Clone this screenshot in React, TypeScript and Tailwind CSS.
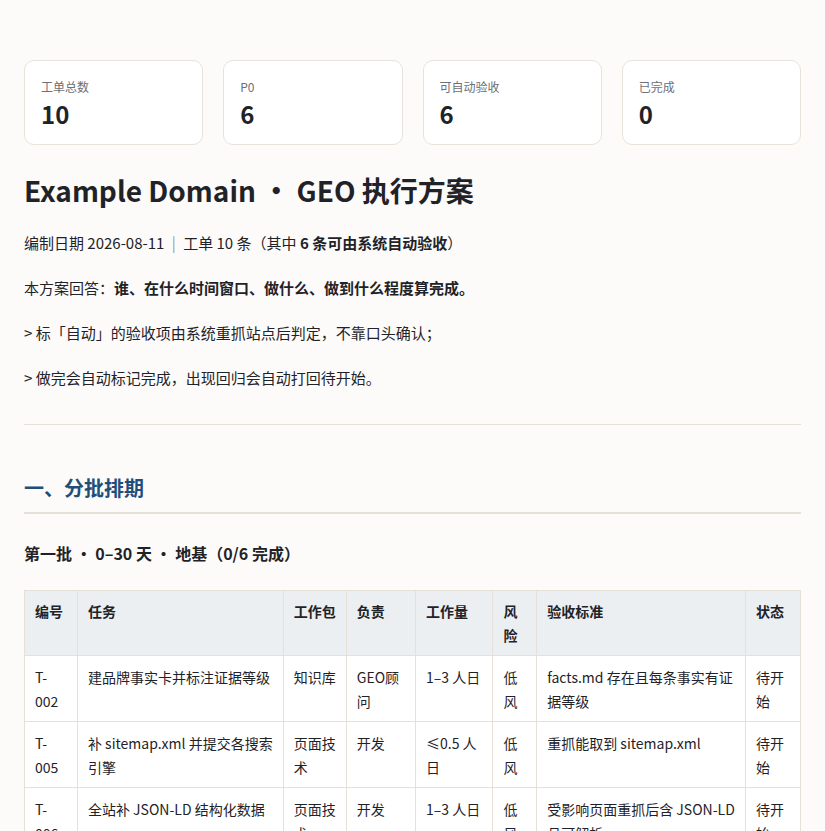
const stats = [
  { label: "工单总数", value: "10" },
  { label: "P0", value: "6" },
  { label: "可自动验收", value: "6" },
  { label: "已完成", value: "0" },
];

const rows = [
  ["T-002", "建品牌事实卡并标注证据等级", "知识库", "GEO顾问", "1–3 人日", "低风", "facts.md 存在且每条事实有证据等级", "待开始"],
  ["T-005", "补 sitemap.xml 并提交各搜索引擎", "页面技术", "开发", "≤0.5 人日", "低风", "重抓能取到 sitemap.xml", "待开始"],
  ["T-006", "全站补 JSON-LD 结构化数据", "页面技术", "开发", "1–3 人日", "低风", "受影响页面重抓后含 JSON-LD 且可解析", "待开始"],
  ["T-007", "补 robots.txt 放行主流 AI 爬虫", "页面技术", "开发", "≤0.5 人日", "低风", "重抓 robots.txt 不屏蔽 GPTBot 等", "待开始"],
];

const heads = ["编号", "任务", "工作包", "负责", "工作量", "风险", "验收标准", "状态"];
const widths = ["w-[52px]", "w-[202px]", "w-[62px]", "w-[68px]", "w-[76px]", "w-[43px]", "w-[205px]", "w-[54px]"];

export default function App() {
  return (
    <div className="h-screen overflow-y-scroll bg-[#fcfbf9] text-[#1f2328] text-[15px]" style={{ fontFamily: '"Noto Sans CJK SC", "Noto Sans", sans-serif' }}>
      <div className="px-6 pt-[60px] pb-20">
        <div className="grid grid-cols-4 gap-[20px]">
          {stats.map((s) => (
            <div key={s.label} className="h-[85px] rounded-[10px] border border-[#e8e3da] bg-white px-4 pt-[17px]">
              <div className="text-[12px] text-[#6b6f76] leading-[18px]">{s.label}</div>
              <div className="text-[24px] font-bold leading-[34px] mt-[1px]">{s.value}</div>
            </div>
          ))}
        </div>

        <h1 className="mt-[23px] text-[28px] font-bold leading-[44px]">Example Domain · GEO 执行方案</h1>
        <p className="mt-[19px] leading-[24px]">
          编制日期 2026-08-11 <span className="text-[#999] mx-1">|</span> 工单 10 条（其中 <b>6 条可由系统自动验收</b>）
        </p>
        <p className="mt-[21px] leading-[24px]">本方案回答：<b>谁、在什么时间窗口、做什么、做到什么程度算完成。</b></p>
        <p className="mt-[21px] leading-[24px]">&gt; 标「自动」的验收项由系统重抓站点后判定，不靠口头确认；</p>
        <p className="mt-[21px] leading-[24px]">&gt; 做完会自动标记完成，出现回归会自动打回待开始。</p>

        <hr className="mt-[34px] border-0 border-t border-[#e5e1d9]" />

        <h2 className="mt-[47px] pb-[8px] border-b-2 border-[#e5e1d9] text-[20px] font-bold text-[#1f4e79] leading-[32px]">一、分批排期</h2>
        <h3 className="mt-[26px] text-[16px] font-bold leading-[26px]">第一批 · 0–30 天 · 地基（0/6 完成）</h3>

        <table className="mt-[24px] w-full border-collapse text-[14px] leading-[24px] table-fixed">
          <thead>
            <tr className="bg-[#ebeff1]">
              {heads.map((h, i) => (
                <th key={h} className={`${widths[i]} border border-[#e6e1d8] px-[10px] pt-[8px] pb-[8px] text-left font-bold align-top`}>{h}</th>
              ))}
            </tr>
          </thead>
          <tbody>
            {rows.map((r) => (
              <tr key={r[0]} className="bg-white">
                {r.map((c, i) => (
                  <td key={i} className="border border-[#e6e1d8] px-[10px] pt-[9px] pb-[8px] align-top">{c}</td>
                ))}
              </tr>
            ))}
          </tbody>
        </table>
      </div>
    </div>
  );
}
